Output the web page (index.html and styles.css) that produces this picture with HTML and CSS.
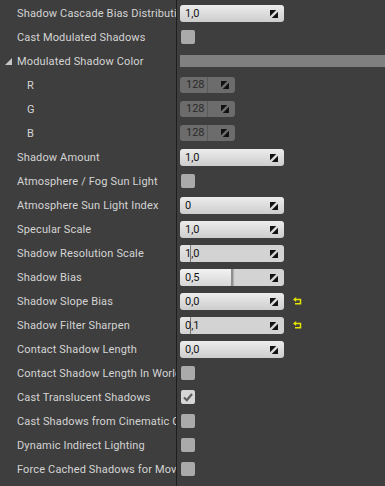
FILE: index.html
```html
<!DOCTYPE html>
<html>
<head>
<meta charset="utf-8">
<link rel="stylesheet" href="styles.css">
</head>
<body>
<div class="panel">
  <div class="row"><div class="name">Shadow Cascade Bias Distribution</div><div class="value"><div class="spin"><span class="num">1,0</span><svg class="arrows" viewBox="0 0 9 9"><polygon points="0,0 7,0 0,7"/><polygon points="9,9 2,9 9,2"/></svg></div></div></div>
  <div class="row"><div class="name">Cast Modulated Shadows</div><div class="value"><div class="check"></div></div></div>
  <div class="row"><div class="name group"><svg class="tri" viewBox="0 0 7 7"><polygon points="0,7 7,7 7,0"/></svg><span>Modulated Shadow Color</span></div><div class="value"><div class="colorbar"></div></div></div>
  <div class="row"><div class="name sub">R</div><div class="value"><div class="chan"><span class="cnum">128</span><svg class="arrows" viewBox="0 0 9 9"><polygon points="0,0 7,0 0,7"/><polygon points="9,9 2,9 9,2"/></svg></div></div></div>
  <div class="row"><div class="name sub">G</div><div class="value"><div class="chan"><span class="cnum">128</span><svg class="arrows" viewBox="0 0 9 9"><polygon points="0,0 7,0 0,7"/><polygon points="9,9 2,9 9,2"/></svg></div></div></div>
  <div class="row"><div class="name sub">B</div><div class="value"><div class="chan"><span class="cnum">128</span><svg class="arrows" viewBox="0 0 9 9"><polygon points="0,0 7,0 0,7"/><polygon points="9,9 2,9 9,2"/></svg></div></div></div>
  <div class="row"><div class="name">Shadow Amount</div><div class="value"><div class="spin"><span class="num">1,0</span><svg class="arrows" viewBox="0 0 9 9"><polygon points="0,0 7,0 0,7"/><polygon points="9,9 2,9 9,2"/></svg></div></div></div>
  <div class="row"><div class="name">Atmosphere / Fog Sun Light</div><div class="value"><div class="check"></div></div></div>
  <div class="row"><div class="name">Atmosphere Sun Light Index</div><div class="value"><div class="spin"><span class="num">0</span><svg class="arrows" viewBox="0 0 9 9"><polygon points="0,0 7,0 0,7"/><polygon points="9,9 2,9 9,2"/></svg></div></div></div>
  <div class="row"><div class="name">Specular Scale</div><div class="value"><div class="spin"><span class="num">1,0</span><svg class="arrows" viewBox="0 0 9 9"><polygon points="0,0 7,0 0,7"/><polygon points="9,9 2,9 9,2"/></svg></div></div></div>
  <div class="row"><div class="name">Shadow Resolution Scale</div><div class="value"><div class="spin slider"><div class="fill thin" style="width:10px"></div><span class="num">1,0</span><svg class="arrows" viewBox="0 0 9 9"><polygon points="0,0 7,0 0,7"/><polygon points="9,9 2,9 9,2"/></svg></div></div></div>
  <div class="row"><div class="name">Shadow Bias</div><div class="value"><div class="spin slider"><div class="fill" style="width:51px"></div><span class="num">0,5</span><svg class="arrows" viewBox="0 0 9 9"><polygon points="0,0 7,0 0,7"/><polygon points="9,9 2,9 9,2"/></svg></div></div></div>
  <div class="row"><div class="name">Shadow Slope Bias</div><div class="value"><div class="spin"><span class="num">0,0</span><svg class="arrows" viewBox="0 0 9 9"><polygon points="0,0 7,0 0,7"/><polygon points="9,9 2,9 9,2"/></svg></div><svg class="reset" viewBox="0 0 9 8"><polygon points="0,2.5 3.2,0 3.2,5"/><path d="M3 2.5 H7.5 V6.8 H2"/></svg></div></div>
  <div class="row"><div class="name">Shadow Filter Sharpen</div><div class="value"><div class="spin slider"><div class="fill thin" style="width:10px"></div><span class="num">0,1</span><svg class="arrows" viewBox="0 0 9 9"><polygon points="0,0 7,0 0,7"/><polygon points="9,9 2,9 9,2"/></svg></div><svg class="reset" viewBox="0 0 9 8"><polygon points="0,2.5 3.2,0 3.2,5"/><path d="M3 2.5 H7.5 V6.8 H2"/></svg></div></div>
  <div class="row"><div class="name">Contact Shadow Length</div><div class="value"><div class="spin"><span class="num">0,0</span><svg class="arrows" viewBox="0 0 9 9"><polygon points="0,0 7,0 0,7"/><polygon points="9,9 2,9 9,2"/></svg></div></div></div>
  <div class="row"><div class="name">Contact Shadow Length In World Space Units</div><div class="value"><div class="check"></div></div></div>
  <div class="row"><div class="name">Cast Translucent Shadows</div><div class="value"><div class="check on"><svg viewBox="0 0 14 14"><path d="M3 7.5 L5.8 10.2 L11 4"/></svg></div></div></div>
  <div class="row"><div class="name">Cast Shadows from Cinematic Objects Only</div><div class="value"><div class="check"></div></div></div>
  <div class="row"><div class="name">Dynamic Indirect Lighting</div><div class="value"><div class="check"></div></div></div>
  <div class="row"><div class="name">Force Cached Shadows for Movable Primitives</div><div class="value"><div class="check"></div></div></div>
</div>
</body>
</html>
```
FILE: styles.css
```css
html, body {
  margin: 0;
  padding: 0;
  background: #3e3e3e;
}
.panel {
  min-height: 486px;
  box-sizing: border-box;
  padding-top: 1px;
  background: linear-gradient(to right, transparent 176px, #1e1e1e 176px, #1e1e1e 177px, transparent 177px);
  font-family: Roboto, "Liberation Sans", sans-serif;
  font-size: 11px;
}
.row {
  display: flex;
  height: 24px;
  align-items: center;
}
.name {
  width: 176px;
  flex: none;
  box-sizing: border-box;
  padding-left: 17px;
  padding-right: 1px;
  color: #d4d4d4;
  letter-spacing: 0.15px;
  white-space: nowrap;
  overflow: hidden;
}
.name.sub {
  padding-left: 27px;
}
.name.group {
  padding-left: 5px;
  display: flex;
  align-items: center;
}
.tri {
  width: 7px;
  height: 7px;
  fill: #c6c6c6;
  margin-right: 5px;
  flex: none;
}
.value {
  flex: 1;
  display: flex;
  align-items: center;
  padding-left: 4px;
  height: 100%;
}
.spin {
  position: relative;
  width: 104px;
  height: 17px;
  box-sizing: border-box;
  border-radius: 3px;
  background: linear-gradient(#ececec, #cdcdcd);
  display: flex;
  align-items: center;
  justify-content: space-between;
  padding: 0 6px 0 5px;
  color: #151515;
  margin-top: 1px;
}
.spin.slider {
  background: #d3d3d3;
  overflow: hidden;
}
.fill {
  position: absolute;
  left: 0;
  top: 0;
  bottom: 0;
  background: linear-gradient(#f2f2f2, #d6d6d6);
  border-right: 2px solid #8f8f8f;
  box-shadow: 1px 0 1px rgba(0,0,0,0.15);
}
.fill.thin {
  border-right: 1px solid #7a7a7a;
  background: linear-gradient(#e6e6e6, #d4d4d4);
  box-shadow: none;
}
.num, .cnum {
  position: relative;
}
.arrows {
  position: relative;
  width: 8px;
  height: 8px;
  fill: #111;
  flex: none;
}
.check {
  width: 14px;
  height: 14px;
  margin-left: 1px;
  border-radius: 2px;
  background: #aaaaaa;
}
.check.on {
  background: #d6d6d6;
}
.check.on svg {
  display: block;
  width: 14px;
  height: 14px;
  fill: none;
  stroke: #5e5e5e;
  stroke-width: 2.2;
}
.colorbar {
  flex: 1;
  height: 12px;
  background: #808080;
}
.chan {
  width: 55px;
  height: 16px;
  box-sizing: border-box;
  border-radius: 3px;
  background: #6c6c6c;
  display: flex;
  align-items: center;
  padding: 0 6px 0 6px;
  color: #2a2a2a;
}
.cnum {
  width: 22px;
  box-sizing: border-box;
  border-right: 1px solid #5a5a5a;
  height: 16px;
  line-height: 16px;
}
.chan .arrows {
  margin-left: auto;
}
.reset {
  width: 9px;
  height: 8px;
  margin-left: 9px;
  fill: #e4e400;
  stroke: none;
  flex: none;
}
.reset path {
  fill: none;
  stroke: #e4e400;
  stroke-width: 1.5;
}
```
